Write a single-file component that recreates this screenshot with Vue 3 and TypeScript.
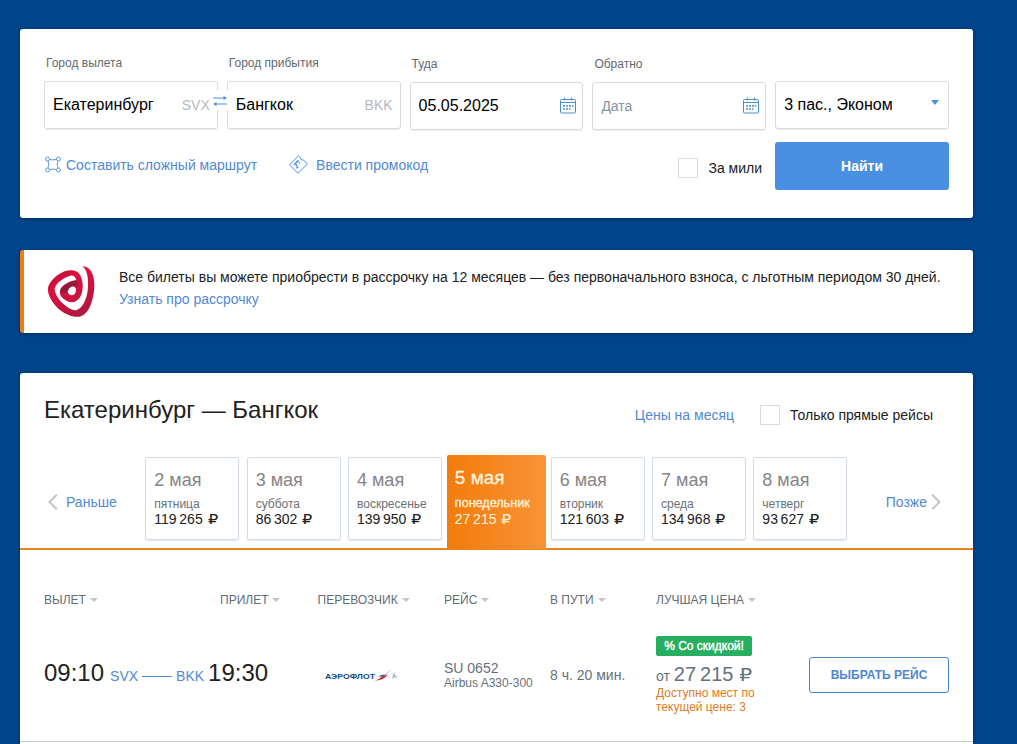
<script setup lang="ts">
interface DayPrice {
  date: string
  weekday: string
  price: string
  active?: boolean
}

const days: DayPrice[] = [
  { date: '2 мая', weekday: 'пятница', price: '119 265' },
  { date: '3 мая', weekday: 'суббота', price: '86 302' },
  { date: '4 мая', weekday: 'воскресенье', price: '139 950' },
  { date: '5 мая', weekday: 'понедельник', price: '27 215', active: true },
  { date: '6 мая', weekday: 'вторник', price: '121 603' },
  { date: '7 мая', weekday: 'среда', price: '134 968' },
  { date: '8 мая', weekday: 'четверг', price: '93 627' },
]

const columns: string[] = ['Вылет', 'Прилет', 'Перевозчик', 'Рейс', 'В пути', 'Лучшая цена']
</script>

<template>
  <main class="page">
    <section class="card search">
      <div class="fields">
        <div class="field">
          <label>Город вылета</label>
          <div class="box">
            <span class="value">Екатеринбург</span><span class="code">SVX</span>
            <span class="swap">
              <svg width="14" height="10" viewBox="0 0 14 10">
                <path d="M0 2h12M2 8h12" stroke="#4a90e2" stroke-width="1.2" fill="none" />
                <path d="M10.5 0L14 2L10.500 4zM3.500 6L0 8L3.500 10z" fill="#4a90e2" />
              </svg>
            </span>
          </div>
        </div>
        <div class="field">
          <label>Город прибытия</label>
          <div class="box"><span class="value">Бангкок</span><span class="code">BKK</span></div>
        </div>
        <div v-for="f in ['Туда', 'Обратно']" :key="f" class="field lower">
          <label>{{ f }}</label>
          <div class="box dated">
            <span v-if="f === 'Туда'" class="value">05.05.2025</span>
            <span v-else class="placeholder">Дата</span>
            <svg class="calendar" width="16" height="17" viewBox="0 0 16 17">
              <rect x="0.5" y="2.5" width="15" height="13.500" rx="1" fill="none" stroke="#4a8fc7" />
              <path d="M0.500 5.500h15M4.500 0.500v3M11.500 0.500v3" stroke="#4a8fc7" fill="none" />
              <path d="M6 9h2M9 9h2M12 9h1.500M3 9h2M3 12h2M6 12h2M9 12h1.500" stroke="#4a8fc7" stroke-width="1.600" />
            </svg>
          </div>
        </div>
        <div class="field">
          <label>&nbsp;</label>
          <div class="box"><span class="value">3 пас., Эконом</span><i class="caret"></i></div>
        </div>
      </div>
      <div class="actions">
        <a class="link route">
          <svg width="16" height="17" viewBox="0 0 17 17" fill="none" stroke="#4a90e2">
            <circle cx="2.700" cy="2.700" r="2.100" /><circle cx="14.300" cy="2.700" r="2.100" />
            <circle cx="2.700" cy="14.300" r="2.100" /><circle cx="14.300" cy="14.300" r="2.100" />
            <path d="M5 3.200Q8.500 4 12 3.200M5 13.800Q8.500 13 12 13.800M3.200 5Q5 8.500 3.200 12M13.800 5Q12 8.500 13.800 12" />
          </svg>
          Составить сложный маршрут
        </a>
        <a class="link promo">
          <svg width="19" height="19" viewBox="0 0 19 19" fill="none" stroke="#4a90e2">
            <path d="M1 9.200L9.700 0.800L11.600 2.800Q11 5.500 14.400 5.100L17.900 8.200Q18.300 9 17.700 9.600L9.800 17.600Q9 18.300 8.200 17.600L1 10.500Q0.500 9.800 1 9.200Z" />
            <path d="M5 9.700L9.500 5.200M6.800 11L8.300 9.500M9.800 8.200L10.800 7.200M7.500 13.200L9.200 11.500" stroke-width="1.600" />
          </svg>
          Ввести промокод
        </a>
        <span class="check miles"><i></i>За мили</span>
        <button class="find">Найти</button>
      </div>
    </section>

    <section class="card notice">
      <svg class="halva" width="60" height="62" viewBox="0 0 180 186">
        <defs>
          <linearGradient id="swirl" x1="0" y1="0" x2="0.500" y2="1">
            <stop offset="0" stop-color="#a51338" /><stop offset="0.400" stop-color="#df103f" /><stop offset="1" stop-color="#b4173f" />
          </linearGradient>
        </defs>
        <path fill="url(#swirl)" d="M127 19C150 18 164 43 163 79C162 113 149 166 118 170C100 173 75 163 61 151C40 135 21 105 24 84C28 61 63 32 90 31C116 29 126 48 128 73C130 101 118 126 97 127C78 126 55 109 60 92C66 75 87 62 109 61C106 50 100 46 91 47C74 50 46 70 44 86C44 103 58 122 75 136C87 146 99 153 110 150C131 143 143 110 144 79C145 48 141 31 127 19Z" />
        <path fill="#8e1c3c" d="M60 92Q66 73 109 61Q114 72 112 84Q105 76 95 79Q84 82 80 99Q68 101 60 92Z" />
        <path fill="#fff" d="M95 80Q107 77 108 90Q107 105 96 106Q86 105 83 96Q86 83 95 80Z" />
      </svg>
      <div class="notice-text">
        <p>Все билеты вы можете приобрести в рассрочку на 12 месяцев — без первоначального взноса, с льготным периодом 30 дней.</p>
        <a class="link">Узнать про рассрочку</a>
      </div>
    </section>

    <section class="card results">
      <header>
        <h1>Екатеринбург — Бангкок</h1>
        <a class="link">Цены на месяц</a>
        <span class="check direct"><i></i>Только прямые рейсы</span>
      </header>

      <nav class="calendar-row">
        <a class="link earlier">
          <svg width="10" height="16" viewBox="0 0 10 16"><path d="M8.800 0.800L1.500 8L8.800 15.200" fill="none" stroke="#c4c4c4" stroke-width="2" /></svg>
          Раньше
        </a>
        <div class="days">
          <div v-for="d in days" :key="d.date" class="day" :class="{ active: d.active }">
            <span class="date">{{ d.date }}</span>
            <span class="weekday">{{ d.weekday }}</span>
            <span class="price">{{ d.price }}<b class="rub">₽</b></span>
          </div>
        </div>
        <a class="link later">
          Позже
          <svg width="10" height="16" viewBox="0 0 10 16"><path d="M1.200 0.800L8.500 8L1.200 15.200" fill="none" stroke="#c4c4c4" stroke-width="2" /></svg>
        </a>
      </nav>

      <div class="row head">
        <span v-for="c in columns" :key="c">{{ c }}<i></i></span>
      </div>

      <div class="row flight">
        <div class="times">
          <strong>09:10</strong><a>SVX</a><hr /><a>BKK</a><strong>19:30</strong>
        </div>
        <div class="carrier">
          <svg width="74" height="14" viewBox="0 0 74 14">
            <text x="0" y="9" font-size="7" font-weight="bold" textLength="50" lengthAdjust="spacingAndGlyphs" fill="#0d4c87">АЭРОФЛОТ</text>
            <path d="M49 10.800Q54 10 56.500 6.500L63 4.500Q59 10.500 49 10.800Z" fill="#d8283c" />
            <path d="M53 6.500Q56 4.800 62 4.300L57 6.500Z" fill="#17528e" />
            <path d="M60 5L65 0.500" stroke="#a8b4c4" stroke-width="0.800" />
            <path d="M67 3.500L70.500 7M70 2.500L68 8.500M67 7.500L72 6M69 5L72 8.500" stroke="#9aa4b0" stroke-width="0.800" />
          </svg>
        </div>
        <div class="number"><span>SU 0652</span><small>Airbus A330-300</small></div>
        <div class="duration">8 ч. 20 мин.</div>
        <div class="best">
          <span class="badge">% Со скидкой!</span>
          <span class="from">от <b>27 215<b class="rub">₽</b></b></span>
          <span class="seats">Доступно мест по<br />текущей цене: 3</span>
        </div>
        <button class="choose">Выбрать рейс</button>
      </div>
    </section>
  </main>
</template>

<style>
body {
  margin: 0;
  background: #00458c;
}
</style>

<style scoped>
* {
  box-sizing: border-box;
}
.page {
  height: 744px;
  overflow: hidden;
  padding: 29px 44px 0 20px;
  background: #00458c;
  font: 14px/16px "Liberation Sans", Arial, sans-serif;
  color: #212121;
}
.card {
  background: #fff;
  border-radius: 3px;
  box-shadow: 0 1px 4px rgba(0, 0, 0, 0.35);
}
.search {
  height: 189px;
  padding: 26px 24px 0;
}
.fields {
  display: grid;
  grid-template-columns: repeat(5, 1fr);
  gap: 9px;
}
.field label {
  display: block;
  height: 16px;
  margin: 0 0 10px 2px;
  font-size: 12px;
  color: #5f6a70;
}
.field.lower {
  padding-top: 1px;
  margin-bottom: -1px;
}
.box {
  position: relative;
  display: flex;
  align-items: center;
  justify-content: space-between;
  height: 48px;
  padding: 0 7px 0 8px;
  border: 1px solid #d9dbdd;
  border-radius: 3px;
  box-shadow: 0 1px 1px rgba(0, 0, 0, 0.08);
}
.box.dated {
  padding-right: 6px;
}
.value {
  font-size: 16px;
  color: #000;
}
.code {
  color: #b3b9be;
}
.placeholder {
  color: #8795a0;
}
.calendar {
  margin-top: -1px;
}
.caret {
  margin: -5px 2px 0 0;
  border: 4px solid transparent;
  border-top: 5px solid #4a90e2;
  border-bottom: 0;
}
.swap {
  position: absolute;
  z-index: 1;
  right: -11px;
  top: 8px;
  display: flex;
  align-items: center;
  justify-content: center;
  width: 16px;
  height: 20px;
  padding-top: 1px;
  background: #fff;
}
.actions {
  display: flex;
  align-items: flex-start;
  margin-top: 13px;
}
.link {
  display: flex;
  color: #5189d2;
}
.route {
  gap: 5px;
  margin: 14px 0 0 1px;
  line-height: 18px;
}
.promo {
  gap: 8px;
  margin: 13px 0 0 32px;
  line-height: 20px;
}
.check {
  display: flex;
  align-items: center;
  gap: 10px;
}
.check i {
  width: 20px;
  height: 20px;
  border: 1px solid #d9dbdd;
}
.miles {
  margin: 16px 13px 0 auto;
}
.find {
  width: 174px;
  height: 48px;
  padding: 0;
  border: 0;
  border-radius: 3px;
  background: #4a90e2;
  font: bold 14px "Liberation Sans", Arial, sans-serif;
  color: #fff;
}
.notice {
  display: flex;
  height: 83px;
  margin-top: 32px;
  border-left: 4px solid #f27c0d;
}
.halva {
  margin: 10px 19px 0 16px;
}
.notice-text {
  padding-top: 16px;
  line-height: 22px;
  white-space: nowrap;
}
.notice-text p {
  margin: 0;
}
.results {
  height: 380px;
  margin-top: 40px;
}
.results header {
  display: flex;
  align-items: center;
  padding: 21px 40px 0 24px;
}
h1 {
  flex: 1;
  margin: 0;
  font-size: 24px;
  line-height: 32px;
  font-weight: normal;
}
.results header .link,
.direct {
  margin-top: 10px;
}
.direct {
  margin-left: 26px;
}
.calendar-row {
  display: flex;
  align-items: center;
  height: 97px;
  margin-top: 27px;
  padding: 5px 32px 8px 28px;
  border-bottom: 2px solid #e8821e;
}
.earlier {
  width: 97.300px;
  gap: 8px;
}
.later {
  margin-left: auto;
  gap: 4px;
}
.earlier,
.later {
  margin-top: 6px;
}
.days {
  display: flex;
  gap: 7.350px;
  height: 84px;
}
.day {
  display: flex;
  flex-direction: column;
  width: 94px;
  height: 83px;
  padding: 12px 0 0 8px;
  border: 1px solid #d3dce6;
  border-radius: 2px;
  box-shadow: 0 1px 1px rgba(120, 140, 160, 0.18);
  white-space: nowrap;
}
.date {
  font-size: 18px;
  line-height: 20px;
  color: #858585;
}
.weekday {
  margin-top: 6px;
  font-size: 12px;
  line-height: 16px;
  color: #6a7178;
}
.price {
  height: 14px;
  line-height: 14px;
  word-spacing: -1.200px;
}
.rub {
  display: inline-block;
  margin-left: 5px;
  font-family: "DejaVu Sans", sans-serif;
  font-size: 1em;
  line-height: 1;
  font-weight: normal;
  transform: scaleX(1.15);
  transform-origin: left;
}
.day.active {
  width: 99px;
  height: 94px;
  margin: -2px -2.500px 0;
  padding: 13px 0 0 8px;
  border: 0;
  background: linear-gradient(90deg, #f27c0d, #f99436);
  box-shadow: none;
}
.active .date,
.active .weekday,
.active .price {
  color: #fff3dd;
}
.active .date,
.active .weekday {
  -webkit-text-stroke: 0.300px;
}
.active .date {
  font-size: 19px;
}
.active .weekday {
  margin-top: 7px;
  font-size: 12.600px;
}
.active .price {
  margin-top: 1px;
}
.row {
  display: grid;
  grid-template-columns: 273.500px 126.500px 106px 106px 153px 140px;
  padding-left: 24px;
}
.head {
  grid-template-columns: 176px 97.500px 126.500px 106px 106px 150px;
  margin-top: 41px;
  font-size: 12px;
  line-height: 18px;
  text-transform: uppercase;
  color: #5f6d78;
}
.head i {
  display: inline-block;
  margin: 0 0 2px 4px;
  border: 4px solid transparent;
  border-top-color: #c2c4c6;
  border-bottom: 0;
}
.flight {
  height: 133px;
  border-bottom: 1px solid #c3cdd6;
  color: #65717b;
}
.times {
  display: flex;
  align-items: baseline;
  height: 30px;
  margin-top: 49px;
  line-height: 30px;
}
.times strong {
  font-size: 24px;
  font-weight: normal;
  color: #212121;
}
.times a {
  margin: 0 4px 0 6px;
  color: #5189d2;
}
.times hr + a {
  margin-left: 4px;
}
.times hr {
  align-self: center;
  width: 30px;
  height: 1px;
  margin: 7px 0 0;
  border: 0;
  background: #5189d2;
}
.carrier {
  padding: 61px 0 0 7.500px;
}
.number {
  display: flex;
  flex-direction: column;
  padding-top: 51px;
}
.number small {
  font-size: 12px;
  line-height: 14px;
}
.duration {
  padding-top: 58px;
}
.best {
  display: flex;
  flex-direction: column;
  align-items: flex-start;
  padding-top: 27px;
  white-space: nowrap;
}
.badge {
  width: 96px;
  border-radius: 2px;
  background: #27ae60;
  font-size: 12px;
  line-height: 20px;
  text-align: center;
  color: #fff;
  -webkit-text-stroke: 0.400px;
}
.from {
  height: 30px;
  line-height: 36px;
}
.from b {
  font-size: 20px;
  font-weight: normal;
  word-spacing: -1.500px;
}
.from .rub {
  margin-left: 6px;
  font-size: 18px;
}
.seats {
  font-size: 12px;
  line-height: 14px;
  color: #e07b24;
}
.choose {
  height: 36px;
  margin-top: 48px;
  padding: 0;
  border: 1px solid #4a86d0;
  border-radius: 3px;
  background: #fff;
  font: bold 12px "Liberation Sans", Arial, sans-serif;
  text-transform: uppercase;
  color: #4f86cf;
}
</style>
